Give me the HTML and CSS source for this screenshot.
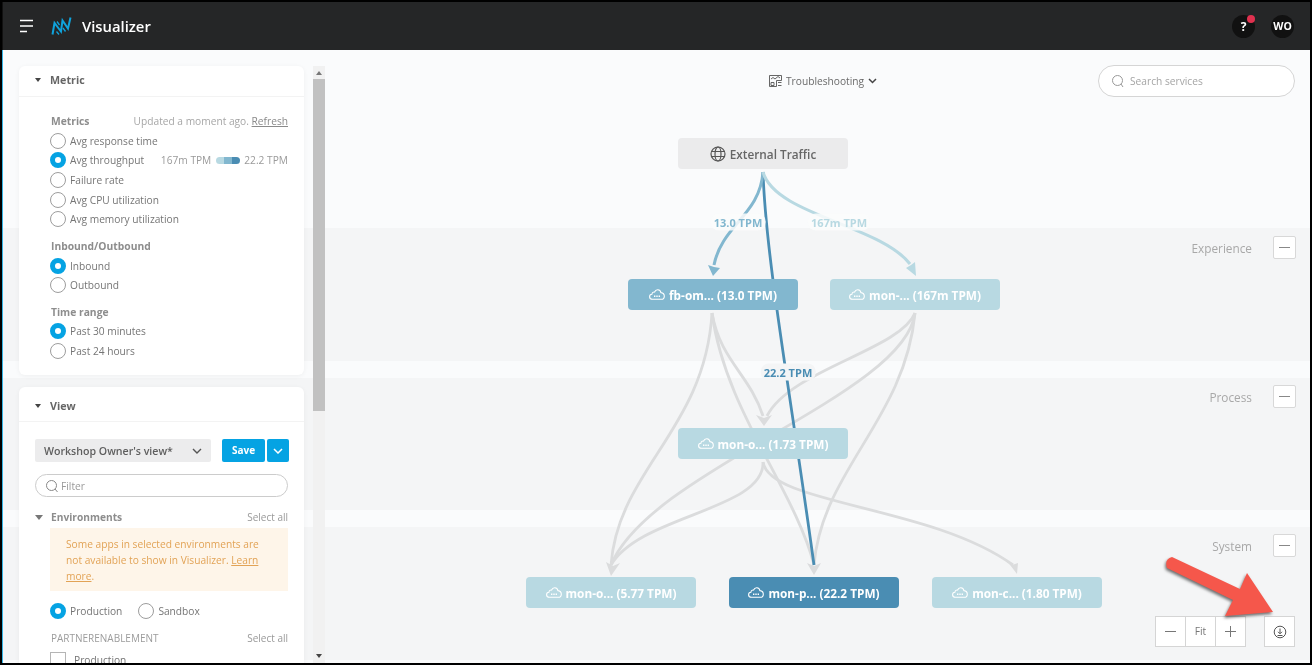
FILE: index.html
```html
<!DOCTYPE html>
<html lang="en">
<head>
<meta charset="utf-8">
<title>Visualizer</title>
<link rel="stylesheet" href="styles.css">
</head>
<body>
<div class="app">
  <header class="topbar">
    <svg class="burger" width="16" height="14" viewBox="0 0 16 14"><path d="M1 1.500h13M1 7h13M1 12.500h7" stroke="#fff" stroke-width="1.600" fill="none"/></svg>
    <svg class="logo" width="22" height="20" viewBox="0 0 22 20"><path d="M1.500 18.500L3.500 7L10 15.500L11.500 4.500L17 12.500L19.500 1.500" stroke="#0fa3dc" stroke-width="2" fill="none"/><path d="M5.500 15.500L8 18.500M12 12l2.500 3.500M6 5.500l2.500 3.500" stroke="#0fa3dc" stroke-width="1.300" fill="none"/></svg>
    <span class="brand">Visualizer</span>
    <span class="spacer"></span>
    <span class="circle help">?<i class="dot"></i></span>
    <span class="circle">WO</span>
  </header>
  <main class="main">
    <div class="bands"><div class="band"></div><div class="band"></div><div class="band"></div></div>
    <aside class="side">
      <section class="card">
        <h2 class="card-head"><i class="tri"></i>Metric</h2>
        <div class="card-body">
          <div class="line"><b>Metrics</b><span class="meta">Updated a moment ago. <u>Refresh</u></span></div>
          <label class="radio"><i class="r"></i>Avg response time</label>
          <label class="radio"><i class="r on"></i>Avg throughput<span class="legend">167m TPM<i class="grad"></i>22.2 TPM</span></label>
          <label class="radio"><i class="r"></i>Failure rate</label>
          <label class="radio"><i class="r"></i>Avg CPU utilization</label>
          <label class="radio"><i class="r"></i>Avg memory utilization</label>
          <div class="line gap"><b>Inbound/Outbound</b></div>
          <label class="radio"><i class="r on"></i>Inbound</label>
          <label class="radio"><i class="r"></i>Outbound</label>
          <div class="line gap"><b>Time range</b></div>
          <label class="radio"><i class="r on"></i>Past 30 minutes</label>
          <label class="radio"><i class="r"></i>Past 24 hours</label>
        </div>
      </section>
      <section class="card view">
        <h2 class="card-head"><i class="tri"></i>View</h2>
        <div class="view-body">
          <div class="save-row">
            <div class="select">Workshop Owner's view*<svg width="10" height="6" viewBox="0 0 10 6"><path d="M1 1l4 4 4-4" stroke="#555" stroke-width="1.400" fill="none"/></svg></div>
            <button class="btn">Save</button>
            <button class="btn more"><svg width="10" height="6" viewBox="0 0 10 6"><path d="M1 1l4 4 4-4" stroke="#fff" stroke-width="1.500" fill="none"/></svg></button>
          </div>
          <div class="filter"><svg width="14" height="14" viewBox="0 0 14 14"><circle cx="6.500" cy="6.500" r="5" stroke="#888" fill="none"/><path d="M10 10l2.500 3" stroke="#888" fill="none"/></svg>Filter</div>
          <div class="env-head"><i class="tri big"></i><b>Environments</b><span class="all">Select all</span></div>
          <div class="warn">Some apps in selected environments are not available to show in Visualizer. <u>Learn more</u>.</div>
          <div class="env-radios">
            <label class="radio"><i class="r on"></i>Production</label>
            <label class="radio"><i class="r"></i>Sandbox</label>
          </div>
          <div class="partner"><span>PARTNERENABLEMENT</span><span class="all">Select all</span></div>
          <label class="check"><i class="box"></i>Production</label>
        </div>
      </section>
    </aside>
    <div class="scroll"><i class="up"></i><i class="thumb"></i><i class="down"></i></div>
    <section class="canvas">
      <div class="mode">
        <svg width="13" height="12" viewBox="0 0 13 12"><path d="M.5.500h12v5h-5v6h-7z M2 4l2-1.500 2 1.500 3-2.500 2 1.500" stroke="#555" stroke-width=".9" fill="none"/><path d="M2 7.500h3v3H2z M9 7.500h3.500M9 10.500h3.500" stroke="#555" stroke-width=".9" fill="none"/></svg>
        Troubleshooting
        <svg width="9" height="6" viewBox="0 0 9 6"><path d="M1 1l3.500 3.500L8 1" stroke="#444" stroke-width="1.500" fill="none"/></svg>
      </div>
      <div class="search"><svg width="14" height="14" viewBox="0 0 14 14"><circle cx="6.500" cy="6.500" r="5" stroke="#999" fill="none"/><path d="M10 10l2 3" stroke="#999" fill="none"/></svg>Search services</div>

      <svg class="edges" width="987" height="613" viewBox="325 50 987 613">
        <g fill="none" stroke="#dbdcdd" stroke-width="2.800">
          <path d="M712 313C720 360 750 375 763 416"/>
          <path d="M712 313C725 410 795 490 814 565"/>
          <path d="M712 313C705 430 618 470 611 565"/>
          <path d="M915 313C900 350 790 370 767 416"/>
          <path d="M915 313C905 420 822 470 814 565"/>
          <path d="M915 313C905 395 650 470 611 565"/>
          <path d="M763 462C765 510 640 515 611 565"/>
          <path d="M763 462C770 505 930 505 1013 565"/>
        </g>
        <g fill="#dbdcdd">
          <polygon points="756,415 764,418 772,415 764,426"/>
          <polygon points="606,562 613,566 620,563 611,576"/>
          <polygon points="807,563 814,566 821,563 814,575"/>
          <polygon points="1007,561 1012,565 1018,563 1017,574"/>
        </g>
        <path d="M763 172C766 260 790 390 814 565" fill="none" stroke="#4a8db3" stroke-width="2.800"/>
        <path d="M763 172C760 215 722 225 714 265" fill="none" stroke="#82b7cf" stroke-width="3"/>
        <polygon points="708,265 714,267 720,268 713,276" fill="#82b7cf"/>
        <path d="M763 172C775 215 880 225 910 264" fill="none" stroke="#b8d9e2" stroke-width="3"/>
        <polygon points="906,268 911,265 915,262 916,276" fill="#b8d9e2"/>
      </svg>
      <span class="elabel c1">13.0 TPM</span>
      <span class="elabel c2">167m TPM</span>
      <span class="elabel c3">22.2 TPM</span>

      <div class="node ext"><svg width="16" height="16" viewBox="0 0 16 16"><g stroke="#555" stroke-width="1.200" fill="none"><circle cx="8" cy="8" r="7"/><ellipse cx="8" cy="8" rx="3" ry="7"/><path d="M1 5.500h14M1 10.500h14"/></g></svg>External Traffic</div>
      <div class="node n1 mid"><svg class="cloud" viewBox="0 0 16 11"><use href="#cloud"/></svg>fb-om... (13.0 TPM)</div>
      <div class="node n2 pale"><svg class="cloud" viewBox="0 0 16 11"><use href="#cloud"/></svg>mon-... (167m TPM)</div>
      <div class="node n3 pale"><svg class="cloud" viewBox="0 0 16 11"><use href="#cloud"/></svg>mon-o... (1.73 TPM)</div>
      <div class="node n4 pale"><svg class="cloud" viewBox="0 0 16 11"><use href="#cloud"/></svg>mon-o... (5.77 TPM)</div>
      <div class="node n5 dark"><svg class="cloud" viewBox="0 0 16 11"><use href="#cloud"/></svg>mon-p... (22.2 TPM)</div>
      <div class="node n6 pale"><svg class="cloud" viewBox="0 0 16 11"><use href="#cloud"/></svg>mon-c... (1.80 TPM)</div>

      <div class="tier t1">Experience<i class="sq"></i></div>
      <div class="tier t2">Process<i class="sq"></i></div>
      <div class="tier t3">System<i class="sq"></i></div>

      <div class="zoom">
        <span class="zb"><i class="minus"></i></span><span class="zb fit">Fit</span><span class="zb"><i class="minus plus"></i></span>
      </div>
      <div class="zb dl"><svg width="14" height="14" viewBox="0 0 14 14"><g stroke="#555" fill="none"><circle cx="7" cy="7" r="5.800"/><path d="M7 3.500v5M5 6.800l2 2 2-2M4.500 10.500h5"/></g></svg></div>

      <svg class="pointer" width="120" height="70" viewBox="1165 553 120 70"><path d="M1172 557L1240 589 1247 573 1273 612 1225 616 1233 600 1167 568Q1164 559 1172 557Z" fill="#f5574b"/></svg>
    </section>
    <svg class="defs" width="0" height="0"><symbol id="cloud" viewBox="0 0 16 11"><path d="M3.500 10.300C1.500 10.300.6 9 .6 7.700c0-1.400 1-2.400 2.300-2.500C3.100 3.600 4.400 2.700 5.600 3c.6-1.500 1.900-2.400 3.300-2.300 1.600.1 2.800 1.300 3 2.900 1.900.2 3.400 1.900 3.400 3.600 0 1.700-1.300 3.100-3 3.100z" stroke="#fff" stroke-width="1.100" fill="none"/><path d="M5 7.300h1.400M7.300 7.300h1.400M9.600 7.300h1.400" stroke="#fff" stroke-width="1.500" fill="none"/></symbol></svg>
  </main>
</div>
</body>
</html>
```
FILE: styles.css
```css
* { box-sizing: border-box; }
html, body { margin: 0; height: 100%; overflow: hidden; }
body { background: #000; font-family: "Open Sans", "Noto Sans", sans-serif; font-size: 10.200px; color: #6c6c6c; }
.app { width: 1312px; height: 665px; padding: 2px; display: flex; flex-direction: column; filter: blur(.3px); }
.topbar { height: 48px; flex: none; background: #252627; display: flex; align-items: center; padding: 0 16px 0 16px; border-left: 1px solid #111; }
.burger { margin-right: 16px; }
.logo { margin-right: 9px; }
.brand { color: #fff; font-size: 14.800px; font-weight: 600; }
.spacer { flex: 1; }
.circle { position: relative; width: 23px; height: 23px; border-radius: 50%; background: #111; color: #fff; font-size: 10.500px; font-weight: 700; display: flex; align-items: center; justify-content: center; margin-left: 16px; }
.help { font-size: 12px; }
.dot { position: absolute; width: 8px; height: 8px; border-radius: 50%; background: #e0314f; top: 0; right: 0; }
.main { position: relative; flex: 1; display: flex; min-height: 0; background: #fafbfc; border-left: 1px solid #35b5e5; overflow: hidden; }
.bands { position: absolute; inset: 178px 0 0 0; display: flex; flex-direction: column; gap: 17px; }
.band { height: 132.500px; flex: none; background: #f4f5f6; }
.side { position: relative; width: 310px; flex: none; padding: 16px 0 0 16px; overflow: hidden; }
.card { width: 285px; background: #fff; border-radius: 6px; box-shadow: 0 1px 5px rgba(0,0,0,.05); }
.card-head { margin: 0; height: 31px; display: flex; align-items: center; padding: 0 0 2px 16px; font-size: 10.700px; font-weight: 700; color: #666; border-bottom: 1px solid #f3f3f3; }
.tri { width: 0; height: 0; border: 3.500px solid transparent; border-top: 4.500px solid #444; border-bottom: 0; margin-right: 9px; }
.tri.big { border-width: 4px; border-top: 5px solid #777; border-bottom: 0; margin: 0 8px 0 0; }
.card-body { padding: 16px 16px 14px 31px; height: 278px; }
.line { display: flex; justify-content: space-between; align-items: center; height: 15px; margin-bottom: 3px; padding-left: 1px; white-space: nowrap; }
.line b { color: #8d8d8d; font-weight: 700; font-size: 10.300px; }
.line.gap { margin-top: 10px; margin-bottom: 2px; }
.line.gap ~ .line.gap { margin-top: 9px; }
.meta { color: #a6a6a6; }
.meta u { color: #8a8a8a; }
.radio { display: flex; align-items: center; height: 19.600px; white-space: nowrap; color: #757575; }
.r { width: 16px; height: 16px; border-radius: 50%; border: 1px solid #9d9d9d; background: #fff; margin-right: 4px; flex: none; }
.r.on { border: 5px solid #05a3e3; }
.legend { margin-left: auto; display: flex; align-items: center; color: #9a9a9a; }
.grad { width: 24px; height: 7px; margin: 0 4px 0 5px; border-radius: 4px; background: linear-gradient(90deg, #b8d9e2 0 35%, #82b7cf 35% 65%, #4a8db3 65%); }
.view { margin-top: 12px; }
.card.view .card-head { height: 35px; padding: 3px 0 0 16px; }
.view-body { padding: 17px 16px 0 16px; }
.save-row { display: flex; align-items: center; height: 23px; }
.select { width: 176px; height: 23px; flex: none; background: #ececed; border-radius: 2px; display: flex; align-items: center; justify-content: space-between; padding: 0 9px; font-size: 10.600px; font-weight: 600; color: #5e5e5e; white-space: nowrap; }
.btn { height: 23px; flex: none; background: #05a3e3; border: 0; border-radius: 2px; color: #fff; font: 700 10px "Open Sans", sans-serif; padding: 0 0 2px; width: 43px; margin-left: 11px; display: flex; align-items: center; justify-content: center; }
.btn.more { width: 22px; margin-left: 2px; padding: 0; }
.filter { height: 23px; margin-top: 12px; border: 1px solid #ccc; border-radius: 12px; display: flex; align-items: center; gap: 2px; padding-left: 9px; color: #9a9a9a; }
.env-head { display: flex; align-items: center; margin: 13px 0 0 0; height: 14px; }
.env-head b { color: #8d8d8d; font-size: 10.200px; }
.all { margin-left: auto; color: #999; font-size: 10px; }
.warn { margin: 4px 0 0 15px; background: #fef5e9; color: #e2a356; padding: 8px 16px; line-height: 16px; height: 63px; }
.env-radios { display: flex; gap: 16px; margin: 10px 0 0 15px; }
.partner { display: flex; margin: 9.400px 0 0 16px; height: 16px; align-items: center; color: #9c9c9c; font-size: 10px; }
.check { display: flex; align-items: center; margin: 6px 0 0 15px; color: #757575; gap: 8px; white-space: nowrap; }
.box { width: 16px; height: 16px; border: 1px solid #b5b5b5; background: #fff; }
.scroll { position: relative; width: 12px; flex: none; background: #f1f1f1; display: flex; flex-direction: column; align-items: center; margin-top: 16px; }
.up { width: 0; height: 0; border: 3px solid transparent; border-bottom: 4px solid #777; border-top: 0; margin: 5px 0 4px; }
.thumb { width: 100%; height: 332px; background: #c1c1c1; }
.down { margin-top: auto; margin-bottom: 5px; width: 0; height: 0; border: 3px solid transparent; border-top: 4px solid #444; border-bottom: 0; }
.canvas { position: relative; flex: 1; min-width: 0; }
.mode { position: absolute; left: 444px; top: 24px; display: flex; align-items: center; gap: 4px; color: #6a6a6a; white-space: nowrap; }
.search { position: absolute; right: 15px; top: 15px; width: 197px; height: 32px; border: 1px solid #d5d5d5; border-radius: 16px; background: #fff; display: flex; align-items: center; gap: 5px; padding-left: 12px; color: #a5a5a5; font-size: 10.200px; }
.edges { position: absolute; left: 0; top: 0; }
.elabel { position: absolute; transform: translate(-50%, -50%); font-size: 11px; font-weight: 700; padding: 1px 3px; background: rgba(250,251,252,.85); border-radius: 8px; white-space: nowrap; }
.c1 { left: 413px; top: 172px; color: #82b7cf; }
.c2 { left: 514px; top: 172px; color: #b8d9e2; }
.c3 { left: 463px; top: 321.500px; color: #4a8db3; background: #f4f5f6; }
.node { position: absolute; width: 170px; height: 31px; border-radius: 4px; display: flex; align-items: center; justify-content: center; gap: 4px; font-weight: 700; font-size: 11.800px; color: #fff; white-space: nowrap; }
.cloud { width: 16px; height: 11px; }
.ext { left: 353px; top: 88px; background: #ebebec; color: #666; font-weight: 600; gap: 4px; }
.pale { background: #b8d9e2; }
.mid { background: #82b7cf; }
.dark { background: #4a8db3; }
.n1 { left: 303px; top: 229px; }
.n2 { left: 505px; top: 229px; }
.n3 { left: 353px; top: 378px; }
.n4 { left: 201px; top: 527px; }
.n5 { left: 404px; top: 527px; }
.n6 { left: 607px; top: 527px; }
.tier { position: absolute; right: 14px; display: flex; align-items: center; gap: 21px; color: #a8a8a8; font-size: 11.800px; height: 23px; }
.t1 { top: 186px; }
.t2 { top: 335px; }
.t3 { top: 484px; }
.sq { position: relative; width: 23px; height: 23px; background: #fff; border: 1px solid #d8d8d8; border-radius: 2px; }
.sq::after { content: ""; position: absolute; left: 5px; right: 5px; top: 10px; height: 1px; background: #888; }
.zoom { position: absolute; right: 65px; top: 566px; display: flex; }
.zb { position: relative; width: 31px; height: 31px; background: #fff; border: 1px solid #d5d5d5; display: flex; align-items: center; justify-content: center; color: #777; font-size: 10.200px; margin-right: -1px; }
.fit { padding-bottom: 2px; }
.minus { width: 11px; height: 1px; background: #777; position: relative; }
.plus::after { content: ""; position: absolute; left: 5px; top: -5px; width: 1px; height: 11px; background: #777; }
.dl { position: absolute; right: 15px; top: 566px; margin: 0; }
.pointer { position: absolute; left: 840px; top: 503px; filter: drop-shadow(-1px 2px 1.500px rgba(0,0,0,.55)); }
.defs { position: absolute; }
```
